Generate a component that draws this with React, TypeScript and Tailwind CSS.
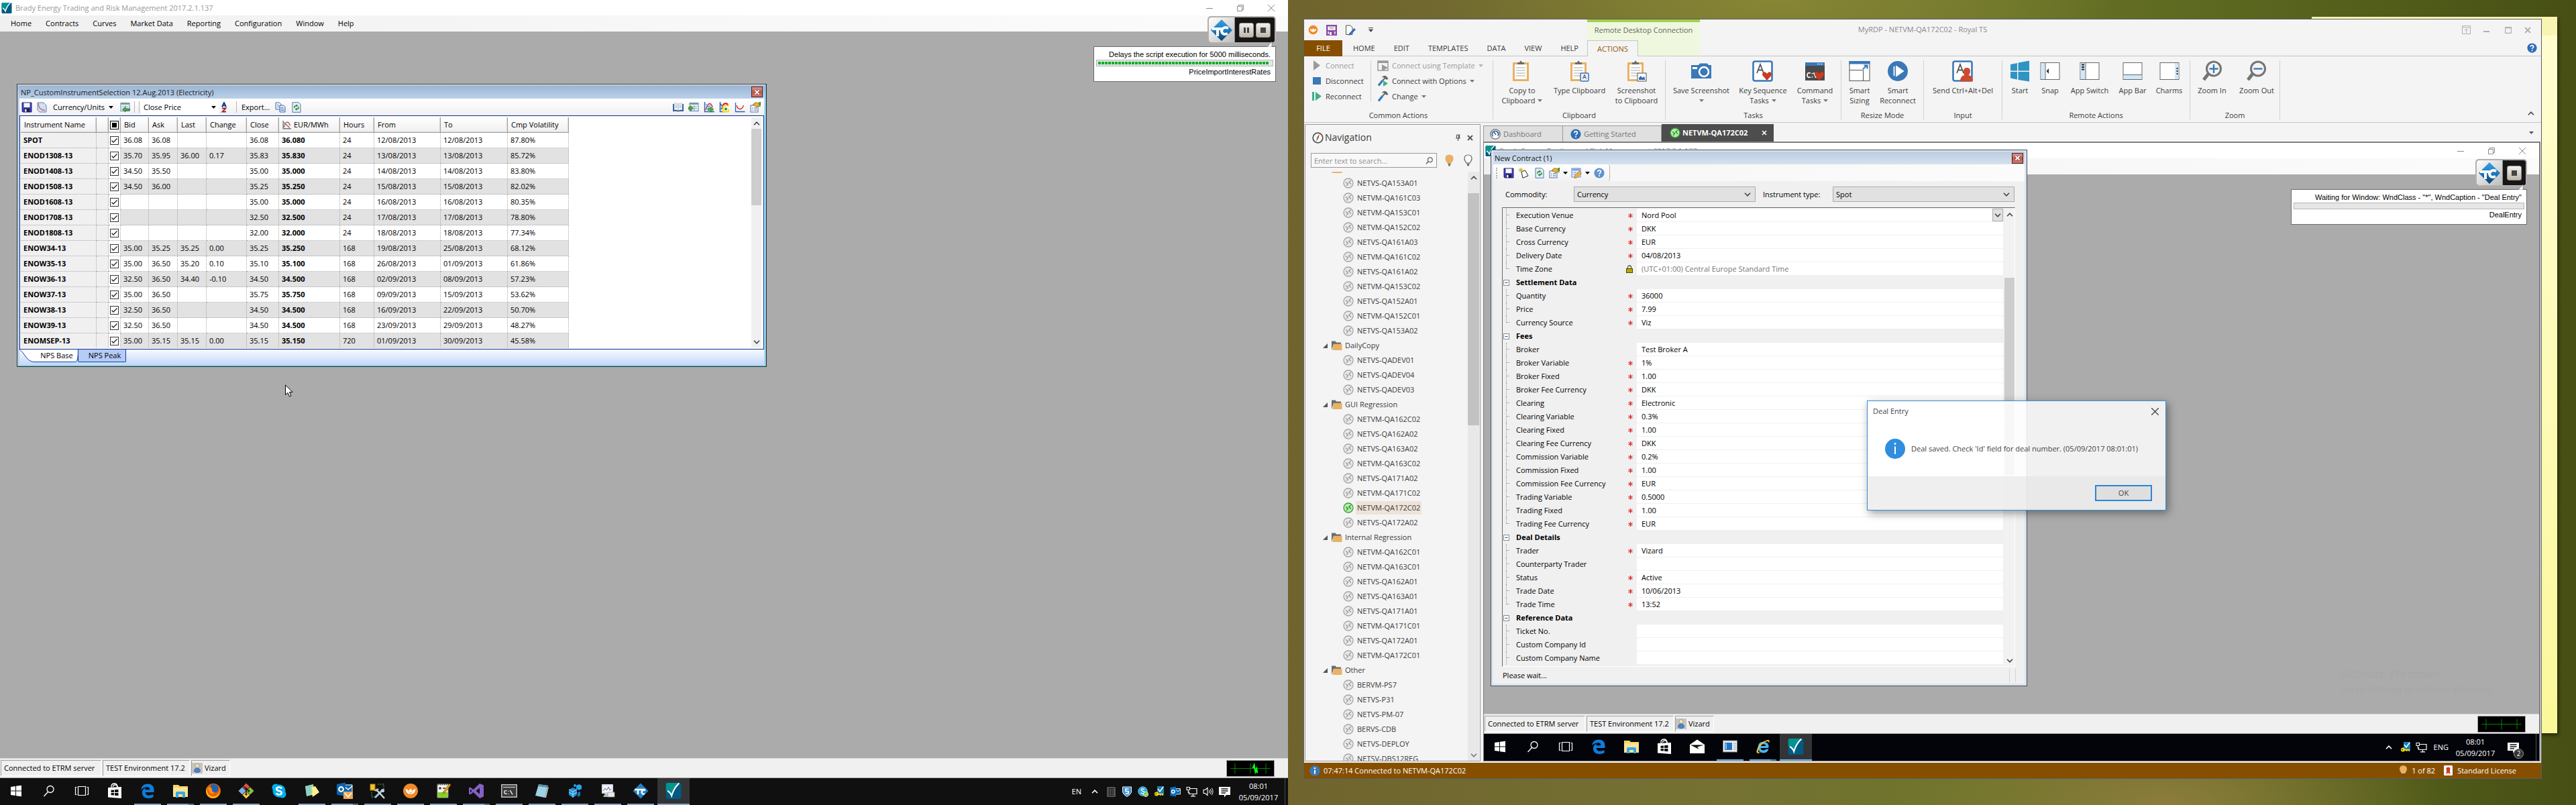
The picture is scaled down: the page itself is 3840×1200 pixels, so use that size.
import React from "react";

type Kids = { children?: React.ReactNode };

/* ---------- drawing helpers ---------- */

function Ico({ w = 16, h, vb = "0 0 16 16", className = "", children }: Kids & { w?: number; h?: number; vb?: string; className?: string }) {
  return (
    <svg width={w} height={h ?? w} viewBox={vb} className={"shrink-0 " + className} aria-hidden="true">
      {children}
    </svg>
  );
}

const BradyLogo = ({ w = 16 }: { w?: number }) => (
  <Ico w={w}>
    <rect x=".5" width="15" height="16" rx="1.5" fill="#005a84" />
    <path d="M2 0H13C10 4 7.500 8.500 6.200 13C5 10 3 8.500 .5 7.500V1.500Q.5 0 2 0Z" fill="#00938f" />
    <path d="M2 8C4 9 5.300 10.500 6.100 12.800C7.500 8 10 3.500 13.600 .3" fill="none" stroke="#fff" strokeWidth="1.400" />
  </Ico>
);

const SaveIco = () => (
  <Ico>
    <path d="M1 1H15V15H2L1 14Z" fill="#3f3fae" stroke="#23237a" />
    <rect x="3.5" y="1.5" width="9" height="6.5" fill="#f4f6ff" />
    <rect x="4" y="10" width="8" height="5" fill="#1c1c50" />
    <rect x="5" y="11" width="2.5" height="3.5" fill="#fff" />
  </Ico>
);

const CurveIco = () => (
  <Ico>
    <path d="M2 1H11L15 5V15H5L2 12Z" fill="#cfe0f5" stroke="#5f87bd" />
    <path d="M3 2C4 10 7 12 13 12.5" fill="none" stroke="#e2554d" strokeWidth="1.3" />
  </Ico>
);

const GridArrowIco = ({ flip = false }: { flip?: boolean }) => (
  <Ico>
    <rect x="2" y="1.5" width="13" height="12" fill="#eaf2fb" stroke="#5a84bb" />
    <rect x="2.5" y="2" width="12" height="2" fill="#7fb07a" />
    <path d="M4 7H13M4 10H13M9 5V13" stroke="#8aa9cf" />
    {flip ? (
      <path d="M0 8H3V5.5L7.5 9.5L3 13.5V11H0Z" fill="#57a33b" stroke="#2f6d1f" strokeWidth=".7" />
    ) : (
      <path d="M16 10H9V7.5L4.5 11.3L9 15V12.5H16Z" fill="#57a33b" stroke="#2f6d1f" strokeWidth=".7" />
    )}
  </Ico>
);

const SortIco = () => (
  <Ico>
    <path d="M5 7.5L8 .8L11 7.5M6 5.2H10" fill="none" stroke="#1c3f8b" strokeWidth="2" />
    <path d="M5 9.5H10.5L5.5 14.5H11" fill="none" stroke="#a02828" strokeWidth="1.8" />
  </Ico>
);

const CopyIco = () => (
  <Ico>
    <path d="M1 1H6.5L9 3.5V11H1Z" fill="#fff" stroke="#3d62a8" />
    <path d="M2.5 4H6M2.5 6H7M2.5 8H7" stroke="#7d9dd1" />
    <path d="M7 5H12.5L15 7.5V15H7Z" fill="#dfe9f8" stroke="#3d62a8" />
    <path d="M8.5 8.5H12M8.5 10.5H13.5M8.5 12.5H13.5" stroke="#5f83c0" />
  </Ico>
);

const RefreshIco = () => (
  <Ico>
    <path d="M2 .7H11L14 3.5V15.3H2Z" fill="#e6effa" stroke="#4e79b5" />
    <path d="M5 9V7.5Q5 5.5 8 5.5M11 7V8.5Q11 10.7 8 10.7" fill="none" stroke="#2f8f2b" strokeWidth="1.5" />
    <path d="M7.5 3.3L10.5 5.5L7.5 7.7ZM8.5 8.5L5.5 10.7L8.5 13Z" fill="#2f8f2b" />
  </Ico>
);

const BookIco = () => (
  <Ico>
    <path d="M0 3H16V14H9L8 15L7 14H0Z" fill="#2f5f9c" />
    <path d="M2 2Q5 1 8 3Q11 1 14 2V12Q11 11 8 12.7Q5 11 2 12Z" fill="#fff" stroke="#8a9bb0" strokeWidth=".6" />
    <path d="M8 3V12.5M3.5 4.5H6.5M3.5 6.5H6.5M3.5 8.5H6.5M9.5 4.5H12.5M9.5 6.5H12.5M9.5 8.5H12.5" stroke="#8a9bb0" strokeWidth=".9" />
  </Ico>
);

const ChartArrowIco = () => (
  <Ico>
    <path d="M1.5 0V14.5H16" fill="none" stroke="#2b62b8" strokeWidth="1.4" />
    <path d="M3 12C6 0 11 0 13 8" fill="none" stroke="#e0222a" strokeWidth="1.5" />
    <path d="M3 3L12 11M12 3L4 9" stroke="#6a9be0" strokeWidth="1.2" />
    <path d="M6 9.5H10V7L15 11L10 15.3V12.5H6Z" fill="#4fae3c" stroke="#246b1b" strokeWidth=".6" />
  </Ico>
);

const ChartClipIco = () => (
  <Ico>
    <path d="M1.5 0V14.5H7" fill="none" stroke="#2b62b8" strokeWidth="1.6" />
    <path d="M2 3L7 9M3 11L8 3" stroke="#2b62b8" strokeWidth="1.6" />
    <path d="M5 7C6 1 12 1 13 5" fill="none" stroke="#e0222a" strokeWidth="2.2" />
    <path d="M14.5 5.5H7.5Q6 5.5 6 7V14.5H12.5Q14.5 14.5 14 11" fill="none" stroke="#ffd800" strokeWidth="2.2" />
    <circle cx="10" cy="10.5" r="2" fill="#2b8f3a" />
  </Ico>
);

const SmileCurveIco = () => (
  <Ico>
    <path d="M1.5 1V14.5H15.5" fill="none" stroke="#2b62b8" strokeWidth="1.3" />
    <path d="M3 5C5 12.5 11 12.5 13.5 5" fill="none" stroke="#e0222a" strokeWidth="1.3" />
  </Ico>
);

const PropsIco = () => (
  <Ico>
    <rect x="1" y="5" width="11" height="10" fill="#f3f6fb" stroke="#5875a5" />
    <path d="M3 9H4.5M6 9H10.5M3 12H4.5M6 12H10.5" stroke="#4d6ea8" />
    <path d="M4 4L8 .8L13 1.5L15 4V7L12 6L9.5 8L7.5 5.5Z" fill="#e3b53a" stroke="#8a6510" strokeWidth=".8" />
    <rect x="13.5" y="0" width="2.5" height="5" fill="#3f8a3a" />
  </Ico>
);

const WandIco = () => (
  <Ico>
    <path d="M5 6L10.5 4L15 12L7 15.3Z" fill="#fff" stroke="#222" />
    <path d="M4 0V7M.5 3.5H7.5M1.5 1L6.5 6M6.5 1L1.5 6" stroke="#c9b400" strokeWidth="1" />
  </Ico>
);

const PencilGridIco = () => (
  <Ico>
    <rect x="1" y="1" width="13" height="13" fill="#eaf2fb" stroke="#5a84bb" />
    <rect x="1.5" y="1.5" width="12" height="3" fill="#7da7dc" />
    <path d="M2 7.5H13M2 10.5H13M6 5V14" stroke="#9ab6da" />
    <path d="M12 5L15.5 8L8.5 15L5 15.7L5.7 12Z" fill="#f2b04a" stroke="#a9701a" strokeWidth=".8" />
  </Ico>
);

const HelpBall = ({ w = 16, fill = "#2f6db5" }: { w?: number; fill?: string }) => (
  <Ico w={w}>
    <circle cx="8" cy="8" r="7.6" fill={fill} />
    <path d="M5.6 6.2Q5.7 3.9 8 3.9Q10.4 3.9 10.4 6Q10.4 7.2 9.1 7.9Q8 8.5 8 9.7" fill="none" stroke="#fff" strokeWidth="1.7" />
    <circle cx="8" cy="12" r="1.1" fill="#fff" />
  </Ico>
);

const UserIco = () => (
  <Ico>
    <rect width="16" height="16" fill="#c9c3c3" />
    <circle cx="8" cy="4.5" r="3" fill="#f0e6b8" stroke="#8b8870" strokeWidth=".7" />
    <path d="M3.5 13Q3.5 8 8 8Q12.5 8 12.5 13Q8 16.5 3.5 13Z" fill="#4a86c7" stroke="#2b5c96" strokeWidth=".7" />
  </Ico>
);

const Caret = ({ className = "text-black" }: { className?: string }) => (
  <Ico w={7} h={4} vb="0 0 7 4" className={className}>
    <path d="M0 0H7L3.5 4Z" fill="currentColor" />
  </Ico>
);

const Chevron = ({ dir = "down", className = "text-[#444]" }: { dir?: "up" | "down"; className?: string }) => (
  <Ico w={10} h={6} vb="0 0 10 6" className={className}>
    <path d={dir === "down" ? "M1 .8L5 4.8L9 .8" : "M1 5.2L5 1.2L9 5.2"} fill="none" stroke="currentColor" strokeWidth="1.6" />
  </Ico>
);

const RdpDot = ({ on = false }: { on?: boolean }) => (
  <Ico>
    <circle cx="8" cy="8" r="7" fill={on ? "#b4eea8" : "#e9e9e9"} stroke={on ? "#3f9c3a" : "#a5a5a5"} strokeWidth="1.3" />
    <path d="M4 6.5L7.3 9L5.3 12M11.8 4L8.8 6.8L12 9.5" fill="none" stroke={on ? "#2f8f2b" : "#9c9c9c"} strokeWidth="1.4" />
  </Ico>
);

const Folder = () => (
  <Ico w={17} h={16} vb="0 0 17 16">
    <path d="M1 15V1.5H6.5L8 3.5H15V6H4Z" fill="#6b6b6b" />
    <path d="M4 5.8H16.5V15H2.5Z" fill="#e8b163" />
  </Ico>
);

const TcLogo = () => (
  <Ico w={34} vb="0 0 34 34">
    <defs>
      <linearGradient id="tcg" x1="0" y1="0" x2="0" y2="1">
        <stop offset="0" stopColor="#3ba0de" />
        <stop offset=".55" stopColor="#1b78bd" />
        <stop offset="1" stopColor="#063a66" />
      </linearGradient>
    </defs>
    <path d="M17 1L33 17L17 33L1 17Z" fill="url(#tcg)" />
    <path d="M3 15H17M11 15V26M27 14Q19 11 17 18Q18 25 26 22" fill="none" stroke="#fff" strokeWidth="4" />
  </Ico>
);

/* ---------- task bar glyphs ---------- */

const tb: Record<string, React.ReactNode> = {
  start: (
    <Ico w={18} vb="0 0 18 18">
      <path d="M1 3L8 2V8.5H1ZM9 1.8L17 .8V8.5H9ZM1 9.5H8V16L1 15ZM9 9.5H17V17.2L9 16.2Z" fill="#fff" />
    </Ico>
  ),
  search: (
    <Ico w={18} vb="0 0 18 18">
      <circle cx="11" cy="6.5" r="5" fill="none" stroke="#fff" strokeWidth="1.3" />
      <path d="M7.5 10.5L1.5 17" stroke="#fff" strokeWidth="1.4" />
    </Ico>
  ),
  tasks: (
    <Ico w={22} h={16} vb="0 0 22 16">
      <path d="M5.5 1.5H16.5V14.5H5.5ZM3.5 2.5H1.5V13.5H3.5M18.5 2.5H20.5V13.5H18.5" fill="none" stroke="#fff" strokeWidth="1.2" />
    </Ico>
  ),
  store: (
    <Ico w={24} vb="0 0 24 24">
      <path d="M7 7V4Q8 1 11.5 1Q15 1 15.5 4V7M9.5 6Q9.5 3 13 3Q16 3 16.5 6" fill="none" stroke="#fff" strokeWidth="1.3" />
      <path d="M2 7L22 6V23L2 21.5Z" fill="#fff" />
      <path d="M6.5 10.8L11 10.4V14H6.5ZM12 10.3L17.5 9.8V14H12ZM6.5 15H11V18.6L6.5 18.2ZM12 15H17.5V19.3L12 18.8Z" fill="#101010" />
    </Ico>
  ),
  edge: (
    <Ico w={24} vb="0 0 24 24">
      <path d="M2 10.5Q3.5 1.5 12 1.5Q21.5 1.5 21.5 11V14H8.5Q9 18.8 14 18.8Q17.5 18.8 20.5 17V21.3Q17.5 23 13.5 23Q4 23 3.8 14.5Q4 9.5 9 7.3Q8.3 8.7 8.3 10.3H15.3Q15.3 6.3 11.3 6.3Q6 6.2 2 10.5Z" fill="#0f7bdc" />
    </Ico>
  ),
  explorer: (
    <Ico w={24} vb="0 0 24 24">
      <path d="M1 3H9L11 5H23V21H1Z" fill="#f5d26b" />
      <path d="M1 7H23V21H1Z" fill="#fbe495" />
      <path d="M5 22V15Q5 13 7 13H17Q19 13 19 15V22H15V17H9V22Z" fill="#35a7e8" />
    </Ico>
  ),
  firefox: (
    <Ico w={24} vb="0 0 24 24">
      <circle cx="12" cy="12" r="11" fill="#e66000" />
      <path d="M8 3Q14 0 19 5Q21 11 17 14Q11 15 9 10Z" fill="#1d63b0" />
      <path d="M3 6Q1 14 7 19Q13 22 18 18Q22 14 21 9Q23 18 16 22Q8 25 3 19Q-1 12 3 6Z" fill="#ffb01f" />
      <path d="M4 7Q8 6 10 9Q9 13 14 15Q10 18 6 14Z" fill="#ff8f1f" />
    </Ico>
  ),
  git: (
    <Ico w={24} vb="0 0 24 24">
      <path d="M12 .5L17.5 6L12 11.5L6.5 6Z" fill="#e0503f" />
      <path d="M6 6.5L11.5 12L6 17.5L.5 12Z" fill="#7fb2e8" />
      <path d="M18 6.5L23.5 12L18 17.5L12.5 12Z" fill="#86c440" />
      <path d="M12 12.5L17.5 18L12 23.5L6.5 18Z" fill="#f4c84a" />
      <path d="M8 5L16 12M12 8V18" stroke="#1a1a1a" strokeWidth="1.3" />
      <circle cx="12" cy="8.5" r="1.6" fill="#1a1a1a" />
      <circle cx="16" cy="12" r="1.6" fill="#1a1a1a" />
      <circle cx="12" cy="17" r="1.6" fill="#1a1a1a" />
    </Ico>
  ),
  skype: (
    <Ico w={24} vb="0 0 24 24">
      <circle cx="12" cy="12" r="9.5" fill="#00aff0" />
      <circle cx="7" cy="7" r="5.5" fill="#00aff0" />
      <circle cx="17" cy="17" r="5.5" fill="#00aff0" />
      <path d="M16 8.7Q14.8 6.5 12 6.5Q8.3 6.5 8.3 9.2Q8.3 11.2 12 12Q15.8 12.8 15.8 14.8Q15.8 17.6 12 17.6Q9 17.6 7.8 15.2" fill="none" stroke="#fff" strokeWidth="2.5" />
    </Ico>
  ),
  notes: (
    <Ico w={24} vb="0 0 24 24">
      <path d="M2 5L14 2L16 17L4 20Z" fill="#a9dba0" />
      <path d="M10 7L17 5L23 14L13 21Z" fill="#fff08a" />
      <path d="M2 5L11 3L13 14L4 20Z" fill="#7cc7d8" opacity=".6" />
    </Ico>
  ),
  outlook: (
    <Ico w={26} h={26} vb="0 0 26 26">
      <path d="M12 4H24V17H12Z" fill="#0a64ad" stroke="#fff" />
      <path d="M12 6L18 11L24 6" fill="none" stroke="#fff" strokeWidth="1.5" />
      <path d="M1 3L14 .5V21L1 18.5Z" fill="#0a64ad" />
      <circle cx="7.5" cy="10.5" r="3.3" fill="none" stroke="#fff" strokeWidth="2.2" />
      <rect x="11" y="14" width="14" height="11" fill="#f0a653" />
      <path d="M13 16L18 22L23 16" fill="none" stroke="#fff" strokeWidth="1.6" />
    </Ico>
  ),
  tools: (
    <Ico w={24} vb="0 0 24 24">
      <rect x="1" y="2" width="7" height="9" fill="#f2c230" stroke="#b98600" />
      <path d="M12 2H21V9M3 14V21H9" fill="none" stroke="#5fae48" strokeDasharray="2 1.5" />
      <path d="M8 22L19 11" stroke="#9dc3e6" strokeWidth="3" />
      <path d="M10 10L22 23" stroke="#d9d9d9" strokeWidth="2.4" />
      <path d="M7 12Q9 7 14 9L11 13Z" fill="#bdbdbd" />
      <circle cx="19.5" cy="11.5" r="2.6" fill="#b7d3ee" />
    </Ico>
  ),
  royal: (
    <Ico w={24} vb="0 0 24 24">
      <circle cx="12" cy="12" r="11" fill="#f08a28" />
      <path d="M4.5 9Q8 9.5 9 12L12 8.5L15 12Q16 9.5 19.5 9Q19 16 12 17Q5 16 4.5 9Z" fill="#fff" />
      <path d="M9 12.5L12 16L15 12.5" fill="none" stroke="#f08a28" strokeWidth="1" />
    </Ico>
  ),
  npp: (
    <Ico w={24} vb="0 0 24 24">
      <path d="M3 2H19V22H3Z" fill="#f5f5ee" stroke="#888" />
      <path d="M3.5 14H18.5V21.5H3.5Z" fill="#7ed321" />
      <path d="M3.5 2.5H18.5" stroke="#555" strokeWidth="2" strokeDasharray="1.5 1.5" />
      <path d="M5 8H9M7 6V10M11 8H15" stroke="#333" strokeWidth="1.4" />
      <path d="M21 1L23 3L14 15L11 16L12 13Z" fill="#f0a020" stroke="#7a4a00" strokeWidth=".7" />
    </Ico>
  ),
  vs: (
    <Ico w={24} vb="0 0 24 24">
      <path d="M17 1L23 3.5V20.5L17 23L7.5 14L3 17.5L1 16.5V7.5L3 6.5L7.5 10ZM17 7.5L11.5 12L17 16.5ZM3 9.5V14.5L5.5 12Z" fill="#865fc5" fillRule="evenodd" />
    </Ico>
  ),
  cmd: (
    <Ico w={24} vb="0 0 24 24">
      <rect x=".8" y="2.8" width="22.4" height="18.4" fill="#3a3a3a" stroke="#d0d0d0" strokeWidth="1.4" />
      <path d="M3 6.5H21" stroke="#d0d0d0" strokeWidth="1.2" />
      <path d="M8.5 12Q4.5 10.5 4.8 14Q4.8 17 8.5 16M11 12V13M11 16V17M13.5 11L17 17.5" fill="none" stroke="#fff" strokeWidth="1.3" />
    </Ico>
  ),
  notepad: (
    <Ico w={24} vb="0 0 24 24">
      <path d="M7 2L21 4L16 22L2 19Z" fill="#9fd3e3" />
      <path d="M7 2L21 4L20 7L6 5Z" fill="#5d8f9e" />
      <path d="M16 22L20.5 7L22 6L18 22Z" fill="#c9c9c9" />
    </Ico>
  ),
  reg: (
    <Ico w={24} vb="0 0 24 24">
      <path d="M3 10L9 7L15 10V18L9 22L3 18Z" fill="#1f8fd1" />
      <path d="M3 10L9 13L15 10M9 13V22M3 14L9 17.5L15 14" fill="none" stroke="#bfe4fa" strokeWidth=".9" />
      <path d="M14 4L18 2L22 4V9L18 11L14 9Z" fill="#2aa3e6" />
      <circle cx="12" cy="4" r="2" fill="#2aa3e6" />
      <path d="M16 14L20 13V19L16 21Z" fill="#1877b5" />
    </Ico>
  ),
  perf: (
    <Ico w={24} vb="0 0 24 24">
      <rect x="3" y="2" width="17" height="14" rx="1" fill="#dcdcdc" />
      <rect x="5" y="4" width="13" height="10" fill="#f6f6fb" />
      <path d="M5.5 12L8 8L10.5 11L13 6L15 11L17.5 9" fill="none" stroke="#4b74b9" />
      <path d="M8 16H15L18 21H5Z" fill="#bdbdbd" />
      <rect x="12" y="14" width="10" height="7" fill="#e8e8e8" stroke="#999" strokeWidth=".7" />
    </Ico>
  ),
  tc: (
    <Ico w={24} vb="0 0 24 24">
      <path d="M12 .5L23.5 12L12 23.5L.5 12Z" fill="#2380c4" />
      <path d="M3 10H19M8 10V17M19 11Q14 10 13.5 14Q14.5 18 18 16" fill="none" stroke="#fff" strokeWidth="2.4" />
    </Ico>
  ),
  brady: <BradyLogo w={24} />,
  mail: (
    <Ico w={24} vb="0 0 24 24">
      <path d="M1 9L12 1.5L23 9V22H1Z" fill="#fff" />
      <path d="M2 9.5L15 16L12 12.5L22 9.5Z" fill="#0a0a0a" />
    </Ico>
  ),
  server: (
    <Ico w={24} vb="0 0 24 24">
      <rect x="1.5" y="3" width="21" height="17" fill="#f0f0f0" stroke="#777" />
      <rect x="4" y="6" width="11" height="11" fill="#1d72c8" />
      <path d="M6 7V16" stroke="#8fc1f2" strokeWidth="2" />
      <path d="M17 7H21M17 10H21M17 13H21M17 16H21" stroke="#7a94b0" />
    </Ico>
  ),
  ie: (
    <Ico w={24} vb="0 0 24 24">
      <path d="M20 14H8.5Q9 17.5 13 17.5Q15.5 17.5 16.5 15.8H20.5Q18.5 21.5 12.8 21.5Q4.5 21 4.5 12.8Q5 5 12.8 4.8Q21 5.2 20.5 13ZM8.7 11H16.3Q15.8 8.3 12.6 8.3Q9.3 8.3 8.7 11Z" fill="#46b5ee" />
      <path d="M21 7Q23.5 1 18 2.3Q9 5 4 14Q.5 22 5 22Q7 21.8 9 20.5Q4 22 5 17Q8 9 16 4.5Q21 2.5 21 7Z" fill="#f6c62f" />
    </Ico>
  ),
};

const tray: Record<string, React.ReactNode> = {
  chip: (
    <Ico w={14} h={15} vb="0 0 14 15">
      <rect x="1" y="1" width="11" height="13" fill="#222" stroke="#8a8a8a" />
      <path d="M3 3V13M5.5 3V13M8 3V13M10.5 3V13" stroke="#9a9a9a" strokeDasharray="1 1" />
    </Ico>
  ),
  shield: (
    <Ico>
      <path d="M1.5 1H14.5V9Q13 13 8 15.5Q3 13 1.5 9Z" fill="#3f8fd6" stroke="#e8f2fb" />
      <path d="M10.5 4H6V7.5H10V11H5.5" fill="none" stroke="#fff" strokeWidth="1.7" />
    </Ico>
  ),
  skype: (
    <Ico>
      <circle cx="7.5" cy="7.5" r="6.8" fill="#1fa8e3" stroke="#d7effb" strokeWidth=".6" />
      <path d="M10 5.2Q9.3 4 7.5 4Q5.3 4 5.3 5.6Q5.3 7 7.5 7.4Q9.8 7.8 9.8 9.2Q9.8 11 7.5 11Q5.6 11 5 9.6" fill="none" stroke="#fff" strokeWidth="1.4" />
      <circle cx="12" cy="12" r="3.6" fill="#7cbb2a" stroke="#fff" strokeWidth=".8" />
      <path d="M10.3 12L11.6 13.3L13.8 10.8" fill="none" stroke="#fff" />
    </Ico>
  ),
  key: (
    <Ico>
      <path d="M5 0H15V13H5Z" fill="#1c7fb8" />
      <path d="M6 4L9 8L14 1" fill="none" stroke="#fff" strokeWidth="1.5" />
      <circle cx="4" cy="11.5" r="3" fill="#ffe600" stroke="#8f7d00" strokeWidth=".6" />
      <path d="M6 11H14V14H12.5V12.5H10.5V14H9V12.8H6.5Z" fill="#ffe600" />
      <circle cx="3.3" cy="11.5" r=".9" fill="#333" />
    </Ico>
  ),
  outlook: (
    <Ico>
      <path d="M8 3.5H15.5V12H8Z" fill="#0a64ad" stroke="#fff" strokeWidth=".8" />
      <path d="M8.5 5L12 8L15 5" fill="none" stroke="#fff" />
      <path d="M.5 2L9 .5V15.5L.5 14Z" fill="#0a70c4" />
      <circle cx="4.8" cy="8" r="2.2" fill="none" stroke="#fff" strokeWidth="1.5" />
    </Ico>
  ),
  net: (
    <Ico w={17} h={16} vb="0 0 17 16">
      <path d="M5.5 3.5H16V11.5H4.5V8M10.5 11.5V14.5M7 14.8H14" fill="none" stroke="#fff" strokeWidth="1.2" />
      <rect x="1" y="1.5" width="4.5" height="4" fill="none" stroke="#fff" />
      <path d="M3.2 5.5V10" stroke="#fff" />
    </Ico>
  ),
  vol: (
    <Ico>
      <path d="M1 5.5H3.5L7 2.5V13.5L3.5 10.5H1Z" fill="none" stroke="#fff" strokeWidth="1.1" />
      <path d="M9.3 5.8Q10.8 8 9.3 10.2M11.3 4.2Q13.8 8 11.3 11.8M13.3 2.8Q16.7 8 13.3 13.2" fill="none" stroke="#fff" />
    </Ico>
  ),
  msg: (
    <Ico w={17} h={17} vb="0 0 17 17">
      <path d="M0 1H17V13H11L8 16.5V13H0Z" fill="#fff" />
      <path d="M3.5 4H13.5M3.5 7H13.5M3.5 10H10" stroke="#101010" strokeWidth="1.3" />
    </Ico>
  ),
};

type Task = { icon: string; name: string; run?: "one" | "many" | "active" };

function TaskBar({ tasks, line, edge, bg, children }: Kids & { tasks: Task[]; line: string; edge: string; bg: string }) {
  return (
    <footer className={"flex h-10 shrink-0 items-stretch text-white " + bg}>
      <nav aria-label="Taskbar" className="flex gap-px">
        {tasks.map((t) => (
          <button
            key={t.name}
            aria-label={t.name}
            className={"flex w-12 flex-col items-center " + (t.run === "active" ? "bg-[#333436]" : "")}
          >
            <span className="flex w-full flex-1 items-center justify-center">{tb[t.icon]}</span>
            <span className={"flex h-[2px] " + (t.run === "active" ? "w-full" : "w-10")}>
              {t.run && <span className={"flex-1 " + line} />}
              {t.run === "many" && <span className={"w-2 " + edge} />}
            </span>
          </button>
        ))}
      </nav>
      <div className="flex-1" />
      {children}
    </footer>
  );
}

/* ---------- ETRM application shell ---------- */

const title = "Brady Energy Trading and Risk Management 2017.2.1.137";
const menus = ["Home", "Contracts", "Curves", "Market Data", "Reporting", "Configuration", "Window", "Help"];

function Pulse({ beat }: { beat: boolean }) {
  return (
    <Ico w={72} h={25} vb="0 0 72 25" className="border border-[#a0a0a0] bg-black">
      <path d="M4 12.5H68M11 4V21M36 4V21M61 4V21" stroke="#0b8a0b" />
      {beat && <path d="M40 12L42 7L44 18L46 13L47 20" fill="none" stroke="#00ff21" strokeWidth="2.4" />}
    </Ico>
  );
}

function StatusCell({ children, className }: Kids & { className: string }) {
  return <span className={"flex h-6 items-center whitespace-nowrap border-b border-r border-b-white border-r-white border-l border-t border-l-[#a0a0a0] border-t-[#a0a0a0] " + className}>{children}</span>;
}

function AppShell({ beat, children }: Kids & { beat: boolean }) {
  return (
    <section className="flex min-h-0 flex-1 flex-col bg-[#ababab]">
      <header className="flex h-[23px] shrink-0 items-center gap-1 bg-white pl-[2px]">
        <BradyLogo />
        <h1 className="pl-px text-[11px] text-[#999]">{title}</h1>
        <div className="ml-auto flex items-center gap-9 pr-5 text-[#8a8a8a]">
          <button aria-label="Minimize"><Ico w={10} vb="0 0 10 10"><path d="M0 5.5H10" stroke="currentColor" /></Ico></button>
          <button aria-label="Restore"><Ico w={10} vb="0 0 10 10"><path d="M.5 2.5H7.5V9.5H.5ZM2.5 2.5V.5H9.5V7.5H7.5" fill="none" stroke="currentColor" /></Ico></button>
          <button aria-label="Close"><Ico w={10} vb="0 0 10 10"><path d="M0 0L10 10M10 0L0 10" stroke="currentColor" /></Ico></button>
        </div>
      </header>
      <nav className="flex h-6 shrink-0 items-center gap-[21px] bg-linear-to-r from-[#f0f0f0] via-[#f7f7f7] to-[#fbfbfb] pl-4">
        {menus.map((m) => (
          <button key={m}>{m}</button>
        ))}
      </nav>
      <main className="relative min-h-0 flex-1">{children}</main>
      <footer className="flex h-[30px] shrink-0 items-center gap-[2px] border-b border-t border-b-[#a8a8a8] border-t-[#d5d5d5] bg-[#f0f0f0] pl-px">
        <StatusCell className="w-[150px] pl-1">Connected to ETRM server</StatusCell>
        <StatusCell className="w-[130px] pl-1">TEST Environment 17.2</StatusCell>
        <StatusCell className="w-[58px] gap-[3px]"><UserIco />Vizard</StatusCell>
        <div className="ml-auto pr-5"><Pulse beat={beat} /></div>
      </footer>
    </section>
  );
}

function Indicator({ running, lines, width }: { running: boolean; lines: [string, string]; width: string }) {
  const btn = "flex size-[22px] items-center justify-center rounded-[3px] border border-[#9b958c] bg-linear-to-b from-[#f3f1ee] to-[#bdb6aa]";
  return (
    <aside className={"absolute -top-[23px] right-[18px] flex flex-col items-end gap-1 font-['Liberation_Sans',sans-serif] " + width}>
      <div className="flex h-[41px] overflow-hidden rounded-[5px] border-2 border-[#b4b0ac] bg-[#161616]">
        <div className="flex w-[39px] items-center justify-center border-r border-[#8c8c8c] bg-linear-to-br from-white to-[#bdbdbd]"><TcLogo /></div>
        <div className="flex items-center gap-[3px] px-[6px]">
          {running && (
            <button aria-label="Pause" className={btn}>
              <Ico w={10} vb="0 0 10 10"><path d="M1 1H4V9H1ZM6 1H9V9H6Z" fill="#444" /></Ico>
            </button>
          )}
          <button aria-label="Stop" className={btn}>
            <Ico w={10} vb="0 0 10 10"><rect x="1" y="1" width="8" height="8" fill="#444" /></Ico>
          </button>
        </div>
      </div>
      <div className="relative w-full border border-[#6d6d6d] bg-white px-[3px] pb-[6px] pt-[3px] text-right">
        <Ico w={8} h={8} vb="0 0 8 8" className="absolute -top-[8px] right-[4px]"><path d="M0 8L7 0V8Z" fill="#fff" stroke="#6d6d6d" strokeWidth=".6" /></Ico>
        <p className="whitespace-nowrap pr-1 leading-4">{lines[0]}</p>
        <div className="h-[10px] border border-[#b5b5b5] bg-[#e6e6e6] px-[2px] py-[2px]">
          {running && <div className="h-1 w-[254px] bg-[repeating-linear-gradient(90deg,#06b025_0_4px,transparent_4px_5px)]" />}
        </div>
        <p className="pr-1 leading-4">{lines[1]}</p>
      </div>
    </aside>
  );
}

/* ---------- instrument list window ---------- */

const cols = [
  ["Instrument Name", "w-[113px]"], ["", "w-[18px]"], ["*", "w-[18px]"], ["Bid", "w-[42px]"], ["Ask", "w-[43px]"], ["Last", "w-[43px]"],
  ["Change", "w-[60px]"], ["Close", "w-[48px]"], ["EUR/MWh", "w-[91px]"], ["Hours", "w-[51px]"], ["From", "w-[99px]"], ["To", "w-[100px]"], ["Cmp Volatility", "w-[91px]"],
];

const quotes = [
  ["SPOT", "36.08", "36.08", "", "", "36.08", "36.080", "24", "12/08/2013", "12/08/2013", "87.80%"],
  ["ENOD1308-13", "35.70", "35.95", "36.00", "0.17", "35.83", "35.830", "24", "13/08/2013", "13/08/2013", "85.72%"],
  ["ENOD1408-13", "34.50", "35.50", "", "", "35.00", "35.000", "24", "14/08/2013", "14/08/2013", "83.80%"],
  ["ENOD1508-13", "34.50", "36.00", "", "", "35.25", "35.250", "24", "15/08/2013", "15/08/2013", "82.02%"],
  ["ENOD1608-13", "", "", "", "", "35.00", "35.000", "24", "16/08/2013", "16/08/2013", "80.35%"],
  ["ENOD1708-13", "", "", "", "", "32.50", "32.500", "24", "17/08/2013", "17/08/2013", "78.80%"],
  ["ENOD1808-13", "", "", "", "", "32.00", "32.000", "24", "18/08/2013", "18/08/2013", "77.34%"],
  ["ENOW34-13", "35.00", "35.25", "35.25", "0.00", "35.25", "35.250", "168", "19/08/2013", "25/08/2013", "68.12%"],
  ["ENOW35-13", "35.00", "36.50", "35.20", "0.10", "35.10", "35.100", "168", "26/08/2013", "01/09/2013", "61.86%"],
  ["ENOW36-13", "32.50", "36.50", "34.40", "-0.10", "34.50", "34.500", "168", "02/09/2013", "08/09/2013", "57.23%"],
  ["ENOW37-13", "35.00", "36.50", "", "", "35.75", "35.750", "168", "09/09/2013", "15/09/2013", "53.62%"],
  ["ENOW38-13", "32.50", "36.50", "", "", "34.50", "34.500", "168", "16/09/2013", "22/09/2013", "50.70%"],
  ["ENOW39-13", "32.50", "36.50", "", "", "34.50", "34.500", "168", "23/09/2013", "29/09/2013", "48.27%"],
  ["ENOMSEP-13", "35.00", "35.15", "35.15", "0.00", "35.15", "35.150", "720", "01/09/2013", "30/09/2013", "45.58%"],
];

const box = "block size-[13px] appearance-none border border-[#333] bg-white";

const CloseBox = ({ label }: { label: string }) => (
  <button aria-label={label} className="flex h-4 w-[17px] items-center justify-center border border-[#4a1c20] bg-linear-to-b from-[#dd9a92] via-[#c2574a] to-[#cf7a68]">
    <Ico w={9} vb="0 0 9 9"><path d="M1.5 1.5L7.5 7.5M7.5 1.5L1.5 7.5" stroke="#55282c" strokeWidth="3" /><path d="M1.5 1.5L7.5 7.5M7.5 1.5L1.5 7.5" stroke="#fff" strokeWidth="1.9" /></Ico>
  </button>
);

const Sep = () => <span className="h-[17px] w-px bg-[#b5b5b5]" />;

function InstrumentWindow() {
  const cell = "h-[23px] overflow-hidden whitespace-nowrap border-b border-r border-dotted border-[#a8a8a8] p-0 pl-1 ";
  return (
    <section className="absolute left-[25px] top-[78px] w-[1118px] border border-[#333] bg-[#b9d1ea] pb-[2px] shadow-[inset_0_-1px_0_#4cc8ea,inset_-1px_0_0_#4cc8ea,inset_0_1px_0_#fff]">
      <header className="mx-px mt-px flex h-5 items-center justify-between bg-linear-to-b from-[#9ab5d2] to-[#bad1ea] pl-1 pr-1">
        <h2 className="pt-px text-[#222]">NP_CustomInstrumentSelection 12.Aug.2013 (Electricity)</h2>
        <CloseBox label="Close instrument selection" />
      </header>
      <div className="mx-[3px] flex h-[25px] items-center bg-linear-to-b from-white to-[#f0f0f0] pl-[3px] pr-[5px]">
        <button aria-label="Save"><SaveIco /></button>
        <button aria-label="Curve" className="pl-[6px]"><CurveIco /></button>
        <button className="flex w-[97px] items-center gap-[6px] pl-[9px]">Currency/Units<Caret /></button>
        <button aria-label="Insert rows" className="pl-[11px]"><GridArrowIco /></button>
        <span className="flex gap-[6px] pl-[6px] pr-[2px]"><Sep /><Sep /></span>
        <label className="relative flex h-[22px] w-[116px] items-center bg-white">
          <span className="sr-only">Price type</span>
          <select className="h-full w-full appearance-none pl-1 outline-none" defaultValue="Close Price"><option>Close Price</option></select>
          <span className="pointer-events-none absolute right-1"><Caret /></span>
        </label>
        <button aria-label="Sort"><SortIco /></button>
        <span className="flex pl-[10px] pr-[7px]"><Sep /></span>
        <button>Export...</button>
        <button aria-label="Copy" className="pl-[8px]"><CopyIco /></button>
        <button aria-label="Refresh" className="pl-[8px]"><RefreshIco /></button>
        <div className="ml-auto flex gap-[7px]">
          <button aria-label="Book"><BookIco /></button>
          <button aria-label="Import"><GridArrowIco flip /></button>
          <button aria-label="Export chart"><ChartArrowIco /></button>
          <button aria-label="Chart clip"><ChartClipIco /></button>
          <button aria-label="Smile"><SmileCurveIco /></button>
          <button aria-label="Properties"><PropsIco /></button>
        </div>
      </div>
      <div className="mx-[3px] flex h-[349px] items-start justify-between overflow-hidden border border-[#0a2f8f] bg-white px-px pt-[2px]">
        <div className="h-[344px] overflow-hidden">
          <table className="table-fixed border-separate border-spacing-0 text-left">
            <thead>
              <tr>
                {cols.map(([c, w], i) => (
                  <th key={i} className={"h-[23px] whitespace-nowrap border-b border-r border-[#a0a0a0] bg-linear-to-b from-white to-[#efefef] p-0 pl-[5px] font-normal shadow-[inset_-1px_-1px_0_#d8d8d8] " + w}>
                    {c === "*" ? (
                      <span className="-ml-[3px] flex size-[13px] items-center justify-center border border-black bg-white"><span className="size-[7px] bg-black" /></span>
                    ) : c === "EUR/MWh" ? (
                      <span className="flex items-center gap-1"><Ico w={13} h={13}><path d="M1.5 0V14.5H16" fill="none" stroke="#777" strokeWidth="1.8" /><path d="M3 12C6 0 11 0 14 9M3 3L13 13" fill="none" stroke="#a06868" strokeWidth="1.8" /></Ico>{c}</span>
                    ) : (
                      c
                    )}
                  </th>
                ))}
              </tr>
            </thead>
            <tbody>
              {quotes.map((q, r) => (
                <tr key={q[0]} className={r % 2 ? "bg-[#e2e2e2]" : "bg-white"}>
                  <td className={cell + "bg-[#f0f0f0] font-bold"}>{q[0]}</td>
                  <td className={cell + "bg-[#f0f0f0]"} />
                  <td className={cell + "relative bg-white"}>
                    <input type="checkbox" defaultChecked aria-label={"Select " + q[0]} className={box + " -ml-[2px]"} />
                    <Ico w={11} vb="0 0 11 11" className="pointer-events-none absolute left-[3px] top-[6px]"><path d="M1.5 5.5L4 8L9.5 2.5" fill="none" stroke="#222" strokeWidth="1.3" /></Ico>
                  </td>
                  {q.slice(1).map((v, i) => (
                    <td key={i} className={cell + (i === 5 ? "font-bold" : "")}>{v}</td>
                  ))}
                </tr>
              ))}
            </tbody>
          </table>
        </div>
        <div className="mr-[2px] flex h-[343px] w-[15px] flex-col items-center bg-[#f0f0f0]">
          <span className="flex h-[17px] items-center"><Chevron dir="up" /></span>
          <span className="h-[114px] w-full bg-[#cdcdcd]" />
          <span className="mt-auto flex h-[17px] items-center"><Chevron /></span>
        </div>
      </div>
      <div className="mx-[3px] flex h-[23px] items-start bg-linear-to-b from-[#f7faff] to-[#c3d8f8]">
        <button className="relative h-[18px] w-[87px] pl-6">
          <Ico w={88} h={19} vb="0 0 88 19" className="absolute left-0 top-0"><path d="M0 0C8 5 10 18 22 18.5H84Q87.500 18 87.500 0Z" fill="#fff" stroke="#1b3f9c" /><path d="M1 0H87" stroke="#fff" strokeWidth="2" /></Ico>
          <span className="relative">NPS Base</span>
        </button>
        <button className="h-[19px] w-[72px] rounded-b-[2px] border border-t-0 border-[#1b3f9c] bg-[#b3cbf5] pl-2">NPS Peak</button>
      </div>
    </section>
  );
}

/* ---------- contract window ---------- */

type Prop = [string, string?, string?];
const props: Prop[] = [
  ["Execution Venue", "*", "Nord Pool"], ["Base Currency", "*", "DKK"], ["Cross Currency", "*", "EUR"], ["Delivery Date", "*", "04/08/2013"],
  ["Time Zone", "lock", "(UTC+01:00) Central Europe Standard Time"], ["Settlement Data"], ["Quantity", "*", "36000"], ["Price", "*", "7.99"],
  ["Currency Source", "*", "Viz"], ["Fees"], ["Broker", "", "Test Broker A"], ["Broker Variable", "*", "1%"], ["Broker Fixed", "*", "1.00"],
  ["Broker Fee Currency", "*", "DKK"], ["Clearing", "*", "Electronic"], ["Clearing Variable", "*", "0.3%"], ["Clearing Fixed", "*", "1.00"],
  ["Clearing Fee Currency", "*", "DKK"], ["Commission Variable", "*", "0.2%"], ["Commission Fixed", "*", "1.00"], ["Commission Fee Currency", "*", "EUR"],
  ["Trading Variable", "*", "0.5000"], ["Trading Fixed", "*", "1.00"], ["Trading Fee Currency", "*", "EUR"], ["Deal Details"], ["Trader", "*", "Vizard"],
  ["Counterparty Trader", "", ""], ["Status", "*", "Active"], ["Trade Date", "*", "10/06/2013"], ["Trade Time", "*", "13:52"], ["Reference Data"],
  ["Ticket No.", "", ""], ["Custom Company Id", "", ""], ["Custom Company Name", "", ""],
];

function Combo({ label, value, lw }: { label: string; value: string; lw: string }) {
  return (
    <label className="flex items-center">
      <span className={lw}>{label}</span>
      <span className="relative flex h-[23px] w-[271px] items-center border border-[#adadad] bg-[#e1e1e1]">
        <select className="h-full w-full appearance-none pl-1 outline-none" defaultValue={value}><option>{value}</option></select>
        <span className="pointer-events-none absolute right-[6px]"><Chevron /></span>
      </span>
    </label>
  );
}

function ContractWindow() {
  return (
    <section className="absolute -top-[37px] left-[10px] w-[800px] border border-[#4c4f55] bg-[#d9e5f2] px-[3px] pb-[3px] pt-[2px]">
      <header className="flex h-[19px] items-center justify-between bg-linear-to-b from-[#bccde0] to-[#d5e2ef] pl-[2px] pr-[2px]">
        <h2 className="text-[#111]">New Contract (1)</h2>
        <CloseBox label="Close contract" />
      </header>
      <div className="bg-[#f0f0f0]">
        <div className="flex h-[25px] items-center bg-linear-to-r from-[#f5f5f5] to-[#fcfcfc]">
          <div className="flex h-full items-center rounded-r-sm border-r border-[#b5b5b5] bg-linear-to-b from-white to-[#f2f2f2] pr-[7px]">
            <span className="ml-1 mr-[9px] h-4 border-l-2 border-dotted border-[#b0b0b0]" />
            <button aria-label="Save"><SaveIco /></button>
            <button aria-label="New" className="pl-[6px]"><WandIco /></button>
            <button aria-label="Refresh" className="pl-[8px]"><RefreshIco /></button>
            <button aria-label="Properties" className="flex items-center gap-[5px] pl-[6px]"><PropsIco /><Caret /></button>
            <button aria-label="Edit" className="flex items-center gap-[5px] pl-[5px]"><PencilGridIco /><Caret /></button>
            <button aria-label="Help" className="pl-[6px]"><HelpBall fill="#5f93cf" /></button>
          </div>
        </div>
        <div className="flex gap-[11px] pb-2 pl-[18px] pt-2">
          <Combo label="Commodity:" value="Currency" lw="w-[102px]" />
          <Combo label="Instrument type:" value="Spot" lw="w-[104px]" />
        </div>
        <div className="ml-[13px] mr-[14px] flex h-[685px] border border-b-white border-l-[#696969] border-r-white border-t-[#696969] pt-px">
          <div className="min-w-0 flex-1 overflow-hidden">
            {props.map(([name, mark, value], i) =>
              mark === undefined ? (
                <div key={name} className="flex h-5 items-center">
                  <span className="flex w-5 justify-start pl-px">
                    <Ico w={9} vb="0 0 9 9"><rect x=".5" y=".5" width="8" height="8" fill="#fff" stroke="#8a8a8a" /><path d="M2.5 4.500H6.500" stroke="#2a4aa0" /></Ico>
                  </span>
                  <h3 className="font-bold">{name}</h3>
                </div>
              ) : (
                <label key={name} className="flex h-5 items-stretch">
                  <span className="flex w-5 pl-[5px]">
                    <span className={"border-l border-dotted border-[#999] " + (props[i + 1] && props[i + 1][1] === undefined ? "h-[10px]" : "h-5")} />
                    <span className="mt-[9px] w-1 border-t border-dotted border-[#999]" />
                  </span>
                  <span className="flex w-[164px] items-center whitespace-nowrap">{name}</span>
                  <span className="flex w-[16px] items-center">
                    {mark === "*" && <Ico w={7} vb="0 0 7 7" className="ml-[3px]"><path d="M3.500 0V7M.5 1.800L6.500 5.200M6.500 1.800L.5 5.200" stroke="#dd2a2a" strokeWidth="1.300" /></Ico>}
                    {mark === "lock" && <Ico w={10} h={12} vb="0 0 10 12"><path d="M2.500 6V3.500Q2.500 1 5 1Q7.500 1 7.500 3.500V6" fill="none" stroke="#555" strokeWidth="1.300" /><rect x=".5" y="5.500" width="9" height="6" fill="#b9a800" stroke="#4d4600" /></Ico>}
                  </span>
                  <span className="relative flex flex-1 border-b border-[#f0f0f0] bg-white">
                    <input defaultValue={value} className={"w-full bg-transparent pl-[7px] outline-none " + (mark === "lock" ? "text-[#777]" : "")} />
                    {i === 0 && <span className="absolute right-0 top-0 flex h-[19px] w-4 items-center justify-center border border-[#adadad] bg-[#e1e1e1]"><Chevron /></span>}
                  </span>
                </label>
              )
            )}
          </div>
          <div className="ml-[2px] flex w-[15px] flex-col items-center bg-[#f2f2f2]">
            <span className="flex h-[17px] items-center"><Chevron dir="up" /></span>
            <span className="mt-[86px] h-[294px] w-full bg-[#cdcdcd]" />
            <span className="mt-auto flex h-[17px] items-center"><Chevron /></span>
          </div>
        </div>
        <footer className="flex h-[25px] items-center pl-[14px]">
          Please wait...
          <span className="ml-auto mr-[13px] h-5 w-[10px] border-x border-[#d5d5d5]" />
        </footer>
      </div>
    </section>
  );
}

function DealDialog() {
  return (
    <section role="dialog" aria-label="Deal Entry" className="absolute left-[571px] top-[337px] flex h-[164px] w-[446px] flex-col border border-[#3a8ed6] bg-[rgb(255_255_255/.83)] text-[#444] shadow-[3px_4px_12px_rgb(0_0_0/.4)]">
      <header className="flex h-[30px] items-center justify-between pl-2 pr-[10px]">
        <h2>Deal Entry</h2>
        <button aria-label="Close"><Ico w={11} vb="0 0 10 10"><path d="M0 0L10 10M10 0L0 10" stroke="#444" strokeWidth="1.200" /></Ico></button>
      </header>
      <div className="flex flex-1 items-center gap-[9px] pl-[26px]">
        <Ico w={30} vb="0 0 30 30"><circle cx="15" cy="15" r="15" fill="#2f8ede" /><path d="M15 11.500V23" stroke="#fff" strokeWidth="2" /><circle cx="15" cy="7.500" r="1.400" fill="#fff" /></Ico>
        <p className="whitespace-nowrap">Deal saved. Check 'Id' field for deal number. (05/09/2017 08:01:01)</p>
      </div>
      <footer className="flex h-[50px] items-center justify-end bg-[rgb(225_225_225/.55)] pr-5">
        <button className="h-6 w-[85px] border-2 border-[#2a85d8] bg-[#dfdfdf]">OK</button>
      </footer>
    </section>
  );
}

/* ---------- Royal TS ---------- */

type Big = { icon: React.ReactNode; a: string; b?: string; drop?: boolean; w: string };

const clip = (extra?: React.ReactNode) => (
  <Ico w={32} vb="0 0 32 32">
    <rect x="3.500" y="4.500" width="21" height="25" fill="#fff" stroke="#e8b163" strokeWidth="3" />
    <path d="M9 6V3H12Q14 -2 16 3H19V6Z" fill="#6b6b6b" />
    <path d="M7 11H21M7 15H21M7 19H21M7 23H21" stroke="#a8a8a8" strokeWidth="1.200" />
    {extra}
  </Ico>
);

const letterA = "M4 18L9 5L14 18M6 13.500H12";
const heart = "M22 30L15.500 22.500Q14 19 17 17.500Q20 16.500 22 20Q24 16.500 27 17.500Q30 19 28.500 22.500Z";

const pane = (inner: React.ReactNode) => (
  <Ico w={30} vb="0 0 30 30">
    <rect x="1" y="2.500" width="28" height="25" fill="#fff" stroke="#666" />
    {inner}
  </Ico>
);

const zoomIco = (plus: boolean) => (
  <Ico w={32} vb="0 0 32 32">
    <path d="M10 20L3 29" stroke="#757575" strokeWidth="5" />
    <circle cx="18" cy="12.500" r="10.500" fill="#f4f4f4" stroke="#757575" strokeWidth="3" />
    <path d={plus ? "M11.500 12.500H24.500M18 6V19" : "M11.500 12.500H24.500"} stroke="#3a78b8" strokeWidth="2.400" />
  </Ico>
);

const groups: { name: string; w: string; items: Big[] }[] = [
  {
    name: "Clipboard", w: "w-[257px]",
    items: [
      { icon: clip(), a: "Copy to", b: "Clipboard", drop: true, w: "w-[86px]" },
      { icon: clip(<><rect x="17" y="19" width="12" height="12" rx="1.500" fill="#e9f1fa" stroke="#3a78b8" strokeWidth="1.500" /><path d="M20.500 27.500L23 21.500L25.500 27.500M21.500 25.500H24.500" fill="none" stroke="#444" /></>), a: "Type Clipboard", w: "w-[85px]" },
      { icon: clip(<><rect x="17" y="19" width="13" height="12" fill="#fff" stroke="#777" strokeWidth="1.300" /><path d="M19 29V26L22 23L24 26L27 24L28.500 29Z" fill="#2f6db5" /></>), a: "Screenshot", b: "to Clipboard", w: "w-[85px]" },
    ],
  },
  {
    name: "Tasks", w: "w-[262px]",
    items: [
      {
        icon: (
          <Ico w={32} vb="0 0 32 32">
            <path d="M1 7H12L14 4.500H25L27 7H31V27H1Z" fill="#3a78b8" />
            <circle cx="20" cy="17" r="7" fill="none" stroke="#fff" strokeWidth="2.600" />
            <rect x="3" y="10" width="7" height="3" fill="#fff" />
          </Ico>
        ),
        a: "Save Screenshot", b: "", drop: true, w: "w-[106px]",
      },
      {
        icon: (
          <Ico w={32} vb="0 0 32 32">
            <rect x="1.500" y="1.500" width="28" height="29" rx="2.500" fill="#fff" stroke="#3a78b8" strokeWidth="2.600" />
            <path d={letterA} transform="translate(3 1)" fill="none" stroke="#555" strokeWidth="1.800" />
            <path d={heart} fill="#cc3a22" />
          </Ico>
        ),
        a: "Key Sequence", b: "Tasks", drop: true, w: "w-[78px]",
      },
      {
        icon: (
          <Ico w={32} vb="0 0 32 32">
            <rect x="1" y="3" width="29" height="27" fill="#4a4a4a" />
            <rect x="1" y="3" width="29" height="5" fill="#3a78b8" />
            <path d="M19 5.500H28" stroke="#fff" strokeWidth="1.500" strokeDasharray="1.500 1.500" />
            <path d="M9 19Q4 17.500 4 22Q4 26.500 9 25M11.500 19V20.500M11.500 24V25.500M13.500 18L17 26" fill="none" stroke="#fff" strokeWidth="1.700" />
            <path d={heart} fill="#cc3a22" />
          </Ico>
        ),
        a: "Command", b: "Tasks", drop: true, w: "w-[77px]",
      },
    ],
  },
  {
    name: "Resize Mode", w: "w-[123px]",
    items: [
      {
        icon: (
          <Ico w={32} vb="0 0 32 32">
            <rect x="1" y="1.500" width="30" height="29" fill="#fff" stroke="#555" />
            <rect x=".5" y="1" width="31" height="4.500" fill="#3a78b8" />
            <path d="M1 14.500H21.500V30" fill="none" stroke="#555" />
            <path d="M21 13L27 7.500M22.500 7.500H27.500V12.500" fill="none" stroke="#3a78b8" strokeWidth="2.200" />
          </Ico>
        ),
        a: "Smart", b: "Sizing", w: "w-[54px]",
      },
      {
        icon: (
          <Ico w={32} vb="0 0 32 32">
            <circle cx="16" cy="16" r="15" fill="#3a78b8" />
            <path d="M10.500 9V23M14 9L24 16L14 23Z" fill="#fff" stroke="#fff" strokeWidth="1.800" />
          </Ico>
        ),
        a: "Smart", b: "Reconnect", w: "w-[60px]",
      },
    ],
  },
  {
    name: "Input", w: "w-[117px]",
    items: [
      {
        icon: (
          <Ico w={32} vb="0 0 32 32">
            <rect x="1.500" y="1.500" width="28" height="29" rx="2.500" fill="#fff" stroke="#3a78b8" strokeWidth="2.600" />
            <path d={letterA} transform="translate(3 1)" fill="none" stroke="#555" strokeWidth="1.800" />
            <path d="M22 11Q27 11 27 16Q27 20 24.500 22Q31 23 31 31.500H12Q12 23 18.500 22Q16.500 20 17 16Q17 11 22 11Z" fill="#cc4a30" />
          </Ico>
        ),
        a: "Send Ctrl+Alt+Del", w: "w-[116px]",
      },
    ],
  },
  {
    name: "Remote Actions", w: "w-[280px]",
    items: [
      { icon: <Ico w={32} vb="0 0 32 32"><path d="M2 6L12 4V15.500H2ZM13.500 3.500L30 .5V15.500H13.500ZM2 17H12V28.500L2 26.500ZM13.500 17H30V31.500L13.500 29Z" fill="#2f94c2" /></Ico>, a: "Start", w: "w-[52px]" },
      { icon: pane(<><rect x="1.500" y="3" width="6" height="24" fill="#cfe8fb" /><path d="M8 3V27" stroke="#666" /><path d="M13 11L9.500 15L13 19Z" fill="#333" /></>), a: "Snap", w: "w-[38px]" },
      { icon: pane(<><rect x="1.500" y="3" width="7" height="24" fill="#cfe8fb" /><path d="M9 3V27" stroke="#666" /><path d="M3 5.500H7M3 9H7M3 12.500H7" stroke="#222" strokeWidth="2" /></>), a: "App Switch", w: "w-[80px]" },
      { icon: pane(<><rect x="1.500" y="21" width="27" height="6" fill="#cfe8fb" /><path d="M1 20.500H29" stroke="#666" /></>), a: "App Bar", w: "w-[48px]" },
      { icon: pane(<><rect x="23" y="3" width="5.500" height="24" fill="#cfe8fb" /><path d="M26.500 10V22" stroke="#222" strokeWidth="2" strokeDasharray="2 2" /></>), a: "Charms", w: "w-[61px]" },
    ],
  },
  { name: "Zoom", w: "w-[134px]", items: [{ icon: zoomIco(true), a: "Zoom In", w: "w-[65px]" }, { icon: zoomIco(false), a: "Zoom Out", w: "w-[68px]" }] },
];

const Hammer = ({ play = false }: { play?: boolean }) => (
  <Ico w={17} vb="0 0 17 17">
    <path d="M2 15.500L8 8" stroke="#3a78b8" strokeWidth="3.200" />
    <path d="M8 8L13 3" stroke="#666" strokeWidth="2" />
    <path d="M6.500 3.500Q10 -1 14 2L16.500 5.500L14 7L11.500 4.500Q9 2.500 6.500 3.500Z" fill="#666" />
    {play && <path d="M9 8L16 12.500L9 17Z" fill="#3fb08a" />}
  </Ico>
);

function Ribbon() {
  const small = "flex h-[23px] items-center gap-[5px] whitespace-nowrap ";
  return (
    <div className="flex h-[99px] shrink-0 border-b border-[#c6c6c6] text-[#3b3b3b]">
      <section className="mt-[6px] flex h-[88px] w-[282px] flex-col justify-between border-r border-[#d2d2d2]">
        <div className="-mt-1 flex">
          <div className="w-[99px] pl-[10px]">
            <button className={small + "text-[#9a9a9a]"} disabled><Ico w={17} vb="0 0 17 17"><path d="M4 1L14 8.500L4 16Z" fill="#9a9a9a" /></Ico>Connect</button>
            <button className={small}><Ico w={17} vb="0 0 17 17"><rect x="3" y="3" width="12" height="11" fill="#3a78b8" /></Ico>Disconnect</button>
            <button className={small}><Ico w={17} vb="0 0 17 17"><path d="M2 2H5V15H2ZM7 2L16 8.500L7 15Z" fill="#3fb08a" /></Ico>Reconnect</button>
          </div>
          <div className="my-1 border-l border-[#d2d2d2] pl-[9px]">
            <div className="-my-1">
              <button className={small + "text-[#9a9a9a]"} disabled><Ico w={17} vb="0 0 17 17"><path d="M1 2H16V16H1Z" fill="none" stroke="#9a9a9a" strokeWidth="1.500" /><path d="M1 2H16V5H1ZM7 7L16 12L7 17Z" fill="#9a9a9a" /></Ico>Connect using Template<Caret className="text-[#b5b5b5]" /></button>
              <button className={small}><Hammer play />Connect with Options<Caret className="text-[#777]" /></button>
              <button className={small}><Hammer />Change<Caret className="text-[#777]" /></button>
            </div>
          </div>
        </div>
        <h3 className="text-center leading-3">Common Actions</h3>
      </section>
      {groups.map((g) => (
        <section key={g.name} className={"mt-[6px] flex h-[88px] flex-col justify-between border-r border-[#d2d2d2] " + g.w}>
          <div className="flex">
            {g.items.map((it) => (
              <button key={it.a + it.b} className={"flex shrink-0 flex-col items-center whitespace-nowrap leading-[15px] " + it.w}>
                <span className="mb-[5px] flex h-8 items-center">{it.icon}</span>
                <span>{it.a}</span>
                <span className="flex h-[15px] items-center gap-1">{it.b}{it.drop && <Caret className="text-[#777]" />}</span>
              </button>
            ))}
          </div>
          <h3 className="text-center leading-3">{g.name}</h3>
        </section>
      ))}
      <button aria-label="Collapse ribbon" className="ml-auto self-end pb-[10px] pr-[10px]"><Chevron dir="up" /></button>
    </div>
  );
}

const tree: [string, string[]][] = [
  ["Daily", ["NETVS-QA153A01", "NETVM-QA161C03", "NETVM-QA153C01", "NETVM-QA152C02", "NETVS-QA161A03", "NETVM-QA161C02", "NETVS-QA161A02", "NETVM-QA153C02", "NETVS-QA152A01", "NETVM-QA152C01", "NETVS-QA153A02"]],
  ["DailyCopy", ["NETVS-QADEV01", "NETVS-QADEV04", "NETVS-QADEV03"]],
  ["GUI Regression", ["NETVM-QA162C02", "NETVS-QA162A02", "NETVS-QA163A02", "NETVM-QA163C02", "NETVS-QA171A02", "NETVM-QA171C02", "NETVM-QA172C02", "NETVS-QA172A02"]],
  ["Internal Regression", ["NETVM-QA162C01", "NETVM-QA163C01", "NETVS-QA162A01", "NETVS-QA163A01", "NETVS-QA171A01", "NETVM-QA171C01", "NETVS-QA172A01", "NETVM-QA172C01"]],
  ["Other", ["BERVM-PS7", "NETVS-P31", "NETVS-PM-07", "BERVS-CDB", "NETVS-DEPLOY", "NETSV-DBS12REG"]],
];

const Bulb = ({ lit, h = 18 }: { lit: boolean; h?: number }) => (
  <Ico w={13} h={h} vb="0 0 13 18">
    <path d="M6.500 1Q12 1 12 6.500Q12 9 9 13H4Q1 9 1 6.500Q1 1 6.500 1Z" fill={lit ? "#e8b163" : "#f8f8f8"} stroke={lit ? "#e8b163" : "#666"} strokeWidth="1.200" />
    <path d="M4.500 14.500H8.500M5 16.500H8" stroke="#555" strokeWidth="1.500" />
  </Ico>
);

function Navigation() {
  return (
    <aside className="ml-[1px] mt-[2px] mb-[2px] flex w-[262px] shrink-0 flex-col border border-[#9a9a9a] bg-[#f4f4f4] text-[#3b3b3b]">
      <header className="flex h-[38px] shrink-0 items-center pl-[10px] pr-[10px]">
        <Ico w={17} vb="0 0 17 17"><circle cx="8.500" cy="8.500" r="7.300" fill="#fff" stroke="#555" strokeWidth="1.800" /><path d="M11 2.500L9.500 9L7 8Z" fill="#cc3a22" /><path d="M6 14.500L7 8L9.500 9Z" fill="#777" /></Ico>
        <h2 className="pl-[2px] text-sm">Navigation</h2>
        <button aria-label="Pin" className="ml-auto mr-[9px]"><Ico w={9} h={10} vb="0 0 9 10"><path d="M2.500 1H6.500V6M2.500 1V6M1 6H8M4.500 6V10M5.500 1V6" fill="none" stroke="#555" strokeWidth="1.200" /></Ico></button>
        <button aria-label="Close navigation"><Ico w={9} vb="0 0 9 9"><path d="M1 1L8 8M8 1L1 8" stroke="#555" strokeWidth="1.800" /></Ico></button>
      </header>
      <div className="flex h-[28px] shrink-0 items-center pl-2 pt-[2px]">
        <label className="flex h-[22px] w-[188px] items-center border border-[#999] bg-[#f8f8f8] pr-[5px]">
          <span className="sr-only">Search</span>
          <input placeholder="Enter text to search..." className="h-full min-w-0 flex-1 bg-transparent pl-1 outline-none placeholder:text-[#8f8f8f]" />
          <Ico w={11} vb="0 0 11 11"><circle cx="6.800" cy="4.200" r="3.400" fill="none" stroke="#666" strokeWidth="1.300" /><path d="M4.300 6.700L.8 10.300" stroke="#666" strokeWidth="1.600" /></Ico>
        </label>
        <button aria-label="Highlight" className="ml-[12px]"><Bulb lit /></button>
        <button aria-label="Dim" className="ml-[15px]"><Bulb lit={false} /></button>
      </div>
      <div className="mt-1 flex min-h-0 flex-1">
        <ul className="flex min-w-0 flex-1 flex-col justify-start overflow-hidden">
          {tree.map(([name, hosts], g) => (
            <li key={name} className={g === 0 ? "-mt-4" : ""}>
              <div className="flex h-[22px] items-center gap-[4px] pl-[26px]">
                <Ico w={7} vb="0 0 7 7"><path d="M7 0V7H0Z" fill={g === 0 ? "transparent" : "#555"} /></Ico>
                <span className="pl-[1px]"><Folder /></span>
                <span>{g === 0 ? "" : name}</span>
              </div>
              <ul>
                {hosts.map((h) => {
                  const on = h === "NETVM-QA172C02";
                  return (
                    <li key={h} className="flex h-[22px] items-center gap-[3px] pl-14">
                      <RdpDot on={on} />
                      <a href="#" className={"px-[2px] leading-5 " + (on ? "bg-[#eee3d8]" : "")}>{h}</a>
                    </li>
                  );
                })}
              </ul>
            </li>
          ))}
        </ul>
        <div className="mr-px flex w-[17px] flex-col items-center bg-[#e8e8e8]">
          <span className="flex h-[17px] items-center"><Chevron dir="up" /></span>
          <span className="mt-[15px] h-[346px] w-full bg-[#c2c2c2]" />
          <span className="mt-auto flex h-[17px] items-center"><Chevron className="text-[#777]" /></span>
        </div>
      </div>
    </aside>
  );
}

const remoteTasks: Task[] = [
  { icon: "start", name: "Start" }, { icon: "search", name: "Search" }, { icon: "tasks", name: "Task view" }, { icon: "edge", name: "Edge" },
  { icon: "explorer", name: "File Explorer" }, { icon: "store", name: "Store" }, { icon: "mail", name: "Mail" }, { icon: "server", name: "Console", run: "one" },
  { icon: "ie", name: "Internet Explorer", run: "many" }, { icon: "brady", name: "Brady ETRM", run: "active" },
];

const localTasks: Task[] = [
  { icon: "start", name: "Start" }, { icon: "search", name: "Search" }, { icon: "tasks", name: "Task view" }, { icon: "store", name: "Store" },
  { icon: "edge", name: "Edge", run: "one" }, { icon: "explorer", name: "File Explorer", run: "many" }, { icon: "firefox", name: "Firefox", run: "one" },
  { icon: "git", name: "Git", run: "one" }, { icon: "skype", name: "Skype" }, { icon: "notes", name: "Sticky Notes", run: "one" },
  { icon: "outlook", name: "Outlook", run: "many" }, { icon: "tools", name: "Admin tools", run: "one" }, { icon: "royal", name: "Royal TS", run: "one" },
  { icon: "npp", name: "Notepad++", run: "one" }, { icon: "vs", name: "Visual Studio", run: "many" }, { icon: "cmd", name: "Command Prompt", run: "one" },
  { icon: "notepad", name: "Notepad", run: "one" }, { icon: "reg", name: "Registry Editor", run: "one" }, { icon: "perf", name: "Resource Monitor", run: "one" },
  { icon: "tc", name: "TestComplete", run: "one" }, { icon: "brady", name: "Brady ETRM", run: "active" },
];

const Clock = () => (
  <time className="flex w-[60px] flex-col text-center leading-[17px]"><span>08:01</span><span>05/09/2017</span></time>
);

function RoyalWindow() {
  return (
    <section className="absolute bottom-[39px] left-[23px] right-[51px] top-7 flex flex-col border border-[#5c5c66] bg-[#f4f4f4]">
      <header className="relative flex h-[31px] shrink-0">
        <div className="flex w-[422px] items-center pl-[6px]">
          <Ico w={15} vb="0 0 24 24"><circle cx="12" cy="12" r="11" fill="#f08a28" /><path d="M4.500 9Q8 9.500 9 12L12 8.500L15 12Q16 9.500 19.500 9Q19 16 12 17Q5 16 4.500 9Z" fill="#fff" /></Ico>
          <button aria-label="Save document" className="pl-[12px]"><Ico w={16}><rect x="1.200" y="1.200" width="13.600" height="13.600" fill="#fff" stroke="#8b4ba8" strokeWidth="2.400" /><rect x="1" y="8" width="14" height="2" fill="#8b4ba8" /><rect x="4" y="10" width="8" height="5" fill="#8b4ba8" /><rect x="5" y="11" width="3" height="4" fill="#fff" /><path d="M4.500 4H11.500M4.500 6H11.500" stroke="#999" /></Ico></button>
          <button aria-label="Edit" className="pl-[12px]"><Ico w={16}><path d="M1.500 1H8L11 4V14.500H1.500Z" fill="#fff" stroke="#555" /><path d="M13.500 5L16 7L8.500 15L5.500 15.800L6 13Z" fill="#2f6db5" /></Ico></button>
          <button aria-label="Customize" className="pl-[19px]"><Ico w={7} h={7} vb="0 0 7 7"><path d="M0 .5H7M.5 3H6.500L3.500 6.500Z" stroke="#555" fill="#555" /></Ico></button>
        </div>
        <span className="flex w-[168px] items-center justify-center border-t-4 border-[#a4d049] bg-[#eff7df] pb-1 text-[#666]">Remote Desktop Connection</span>
        <h1 className="pointer-events-none absolute inset-x-0 top-[7px] text-center text-[#8a8a8a]">MyRDP - NETVM-QA172C02 - Royal TS</h1>
        <div className="ml-auto flex items-center gap-[19px] pr-[15px] text-[#b0b0b0]">
          <button aria-label="Ribbon options"><Ico w={13} vb="0 0 13 13"><path d="M.500 .500H12.500V12.500H.500ZM.500 3H12.500M6.500 11V5.500M4 7.500L6.500 5L9 7.500" fill="none" stroke="currentColor" /></Ico></button>
          <button aria-label="Minimize Royal TS"><Ico w={9} vb="0 0 9 9"><path d="M0 7H9" stroke="currentColor" strokeWidth="2" /></Ico></button>
          <button aria-label="Maximize Royal TS" className="pl-[4px]"><Ico w={10} vb="0 0 10 10"><path d="M.500 .500H9.500V9.500H.500ZM.500 1.500H9.500" fill="none" stroke="currentColor" strokeWidth="1.300" /></Ico></button>
          <button aria-label="Close Royal TS"><Ico w={10} vb="0 0 10 10"><path d="M1 1L9 9M9 1L1 9" stroke="currentColor" strokeWidth="2" /></Ico></button>
        </div>
      </header>
      <nav className="flex h-6 shrink-0 items-stretch text-[#3b3b3b]">
        <button className="w-[57px] bg-[#864f00] text-white">FILE</button>
        <div className="flex w-[365px] justify-between border-b border-[#c6c6c6] pl-4 pr-[13px]">
          {["HOME", "EDIT", "TEMPLATES", "DATA", "VIEW", "HELP"].map((t) => (
            <button key={t}>{t}</button>
          ))}
        </div>
        <button className="w-[76px] border-x border-t border-[#c6c6c6] text-[#96590a]">ACTIONS</button>
        <span className="w-[92px] border-b border-[#c6c6c6] bg-[#eff7df]" />
        <div className="flex flex-1 items-center justify-end border-b border-[#c6c6c6] pr-[6px]"><button aria-label="Help"><HelpBall w={15} /></button></div>
      </nav>
      <Ribbon />
      <div className="flex min-h-0 flex-1">
        <Navigation />
        <div className="ml-1 mr-[1px] mt-[2px] mb-[2px] flex min-w-0 flex-1 flex-col">
          <div className="flex h-[26px] shrink-0 items-end text-[#777]">
            <button className="flex h-6 w-[119px] items-center gap-1 border border-b-0 border-[#999] bg-[#e0e0e0] pl-[9px]"><Ico><circle cx="8" cy="8" r="7.200" fill="#fff" stroke="#666" strokeWidth="1.200" /><circle cx="8" cy="8" r="4.600" fill="none" stroke="#2f6db5" strokeWidth="2" strokeDasharray="20 9" transform="rotate(135 8 8)" /><path d="M6 5L9 9" stroke="#444" strokeWidth="1.300" /></Ico>Dashboard</button>
            <button className="flex h-6 w-[147px] items-center gap-1 border border-b-0 border-l-0 border-[#999] bg-[#e0e0e0] pl-[11px]"><HelpBall />Getting Started</button>
            <button className="flex h-[26px] w-[167px] items-center gap-[3px] bg-[#4d4d4d] pl-[12px] text-white"><RdpDot on /><b>NETVM-QA172C02</b><Ico w={8} vb="0 0 8 8" className="ml-auto mr-[10px]"><path d="M1 1L7 7M7 1L1 7" stroke="#fff" strokeWidth="1.600" /></Ico></button>
            <span className="ml-auto self-center pr-[10px]"><Caret className="text-[#555]" /></span>
          </div>
          <div className="flex min-h-0 flex-1 flex-col border-b border-l border-r-2 border-t-2 border-[#7f7f7f]">
            <AppShell beat={false}>
              <div className="absolute bottom-[26px] right-[66px] leading-6 text-[#a7a7a7]"><p className="text-lg">Activate Windows</p><p className="text-sm">Go to Settings to activate Windows.</p></div>
              <Indicator running={false} width="w-[352px]" lines={['Waiting for Window: WndClass - "*", WndCaption - "Deal Entry"', "DealEntry"]} />
              <ContractWindow />
              <DealDialog />
            </AppShell>
            <TaskBar tasks={remoteTasks} line="bg-[#76b9ed]" edge="bg-[#4f7ea5]" bg="bg-[#02040a]">
              <div className="flex items-center">
                <Chevron dir="up" className="text-white" />
                <span className="pl-[12px]">{tray.key}</span>
                <span className="pl-[7px]">{tray.net}</span>
                <span className="pl-[10px]">ENG</span>
                <span className="pl-[10px]"><Clock /></span>
                <span className="relative ml-[18px] mr-[25px] flex">{tray.msg}<span className="absolute -bottom-2 -right-[7px] flex size-[15px] items-center justify-center rounded-full border border-[#999] bg-[#333] text-[10px]">2</span></span>
                <span className="mr-1 h-10 w-px bg-[#555]" />
              </div>
            </TaskBar>
          </div>
        </div>
      </div>
      <footer className="flex h-[23px] shrink-0 items-center bg-[#864f00] pl-2 text-white">
        <Ico><circle cx="8" cy="8" r="7.800" fill="#3a78b8" /><path d="M8 7V12.500" stroke="#fff" strokeWidth="2" /><circle cx="8" cy="4.200" r="1.300" fill="#fff" /></Ico>
        <span className="pl-[5px]">07:47:14 Connected to NETVM-QA172C02</span>
        <span className="ml-auto flex items-center gap-[6px]"><Bulb lit h={16} />1 of 82</span>
        <span className="ml-[13px] mr-[37px] flex items-center gap-[7px]"><Ico w={13} h={15} vb="0 0 13 15"><rect width="13" height="15" rx="1" fill="#fff" /><circle cx="6.500" cy="5.500" r="3" fill="#cc3a22" /><path d="M4 8L3.500 13L6.500 11L9.500 13L9 8Z" fill="#cc3a22" /></Ico>Standard License</span>
      </footer>
    </section>
  );
}

export default function App() {
  return (
    <div className="flex h-screen w-full overflow-hidden font-['Open_Sans',sans-serif] text-[11px] leading-4 text-black">
      <div className="relative flex w-1/2 flex-col">
        <AppShell beat>
          <Indicator running width="w-[272px]" lines={["Delays the script execution for 5000 milliseconds.", "PriceImportInterestRates"]} />
          <InstrumentWindow />
          <Ico w={12} h={19} vb="0 0 12 19" className="absolute left-[425px] top-[526px]"><path d="M.500 1V15.500L4 12.500L6.500 18L9 17L6.500 11.500H11.200Z" fill="#fff" stroke="#000" /></Ico>
        </AppShell>
        <TaskBar tasks={localTasks} line="bg-[#8ba6cd]" edge="bg-[#5d7190]" bg="bg-[#101010]">
          <div className="flex items-center">
            <span className="pr-[15px]">EN</span>
            <Chevron dir="up" className="text-white" />
            <span className="flex items-center gap-2 pl-[13px]">{tray.chip}{tray.shield}{tray.skype}{tray.key}{tray.outlook}{tray.net}{tray.vol}{tray.msg}</span>
            <span className="pl-[12px]"><Clock /></span>
            <span className="ml-[9px] mr-1 h-10 w-px bg-[#4a4a4a]" />
          </div>
        </TaskBar>
      </div>
      <div className="relative w-1/2 overflow-hidden bg-[radial-gradient(420px_160px_at_68%_100%,#8d7d3c,transparent),radial-gradient(500px_120px_at_38%_0%,#868634,transparent),linear-gradient(90deg,#6f642d_0%,#757233_35%,#6a7428_55%,#56621c_80%,#474f14_100%)]">
        <div className="absolute bottom-[107px] right-7 top-[25px] w-[366px] border-t-[28px] border-[#f8f5b2] bg-linear-to-b from-[#fffdd0] to-[#fbf89a] shadow-[2px_3px_5px_rgb(0_0_0/.5)]" />
        <RoyalWindow />
      </div>
    </div>
  );
}
